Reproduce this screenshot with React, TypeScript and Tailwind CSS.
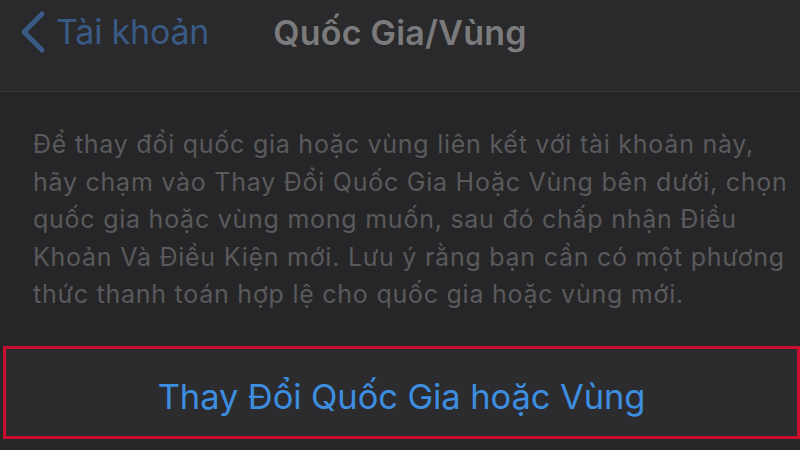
export default function App() {
  return (
    <div className="w-[800px] h-[450px] overflow-hidden bg-[#262628] font-['Inter','Noto_Sans',sans-serif]">
      {/* Navigation bar */}
      <div className="relative h-[92px] bg-[#2a2a2c] border-b border-[#39393b] flex items-start">
        <button className="flex items-center pl-[18px] pt-[10px] text-[#3a5a86]">
          <svg width="28" height="44" viewBox="0 0 28 44" fill="none">
            <path d="M24 4 L6 22 L24 40" stroke="currentColor" strokeWidth="5" strokeLinecap="round" strokeLinejoin="round" />
          </svg>
          <span className="ml-[10px] text-[34px] leading-none tracking-[-0.2px]">Tài khoản</span>
        </button>
        <h1 className="absolute left-0 right-0 top-[13px] text-center text-[34px] leading-[40px] font-semibold tracking-[0.2px] text-[#7b7b7d]">
          Quốc Gia/Vùng
        </h1>
      </div>

      {/* Explanation */}
      <p className="px-[33px] pt-[34px] text-[25px] leading-[37.5px] tracking-[0.75px] whitespace-nowrap text-[#5a5a5c]">
        Để thay đổi quốc gia hoặc vùng liên kết với tài khoản này,
        <br />
        hãy chạm vào Thay Đổi Quốc Gia Hoặc Vùng bên dưới, chọn
        <br />
        quốc gia hoặc vùng mong muốn, sau đó chấp nhận Điều
        <br />
        Khoản Và Điều Kiện mới. Lưu ý rằng bạn cần có một phương
        <br />
        thức thanh toán hợp lệ cho quốc gia hoặc vùng mới.
      </p>

      {/* Action row */}
      <div className="mt-[32px] ml-[3px] h-[93px] bg-[#2c2c2e] border-[3px] border-[#c8102e] flex items-center justify-center pt-[10px]">
        <span className="text-[34.5px] text-[#3d8ee0] tracking-[-0.1px]">Thay Đổi Quốc Gia hoặc Vùng</span>
      </div>
    </div>
  );
}
